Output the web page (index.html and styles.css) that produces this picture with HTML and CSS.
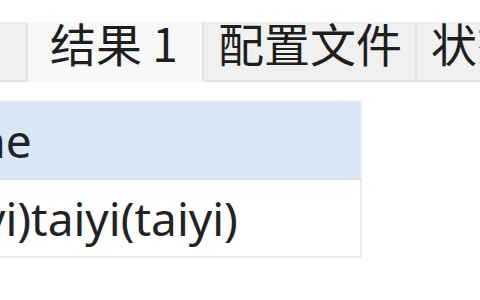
FILE: index.html
```html
<!DOCTYPE html>
<html>
<head>
	<meta charset="utf-8">
	<title>结果 1</title>
	<link rel="stylesheet" href="styles.css">
</head>
<body>
	<div class="page">
		<div class="tabs">
			<div class="tab first">信息</div>
			<div class="tab active">结果 1</div>
			<div class="tab">配置文件</div>
			<div class="tab">状态</div>
		</div>
		<div class="result">
			<table class="grid">
				<tr class="head"><td>Name</td></tr>
				<tr><td>i(taiyi)taiyi(taiyi)</td></tr>
			</table>
		</div>
	</div>
</body>
</html>
```

FILE: styles.css
```css
body {
	margin: 0;
	background: #ffffff;
	font-family: "Noto Sans", "Noto Sans CJK SC", sans-serif;
	color: #222222;
}

.page {
	width: 480px;
	height: 300px;
	overflow: hidden;
	padding-top: 22px;
	box-sizing: border-box;
}

.tabs {
	display: flex;
	height: 60px;
	margin-left: -94px;
	white-space: nowrap;
}

.tab {
	background-color: #f0f0f0;
	border-right: 2px solid #e4e4e4;
	border-bottom: 2px solid #e4e4e4;
	font-family: "Noto Sans CJK SC", sans-serif;
	font-size: 46px;
	line-height: 40px;
	padding: 0 13px 0 14px;
	flex: none;
	color: #1e1e1e;
}

.tab.first {
	width: 120px;
	padding: 0;
	overflow: hidden;
}

.tab.active {
	background-color: #f8f8f8;
	border-bottom-color: #f8f8f8;
	width: 152px;
	padding: 0 0 0 22px;
}

.result {
	padding-top: 18px;
	margin-left: -110px;
}

.grid {
	border-collapse: collapse;
	border: 2px solid #eeeeee;
	width: 472px;
	font-size: 46px;
}

.grid td {
	height: 76px;
	padding: 0 0 0 10px;
	line-height: 76px;
	white-space: nowrap;
	overflow: hidden;
}

.grid .head td {
	background-color: #d9e8f6;
	border-bottom: 2px solid #e0e0e0;
}
```
